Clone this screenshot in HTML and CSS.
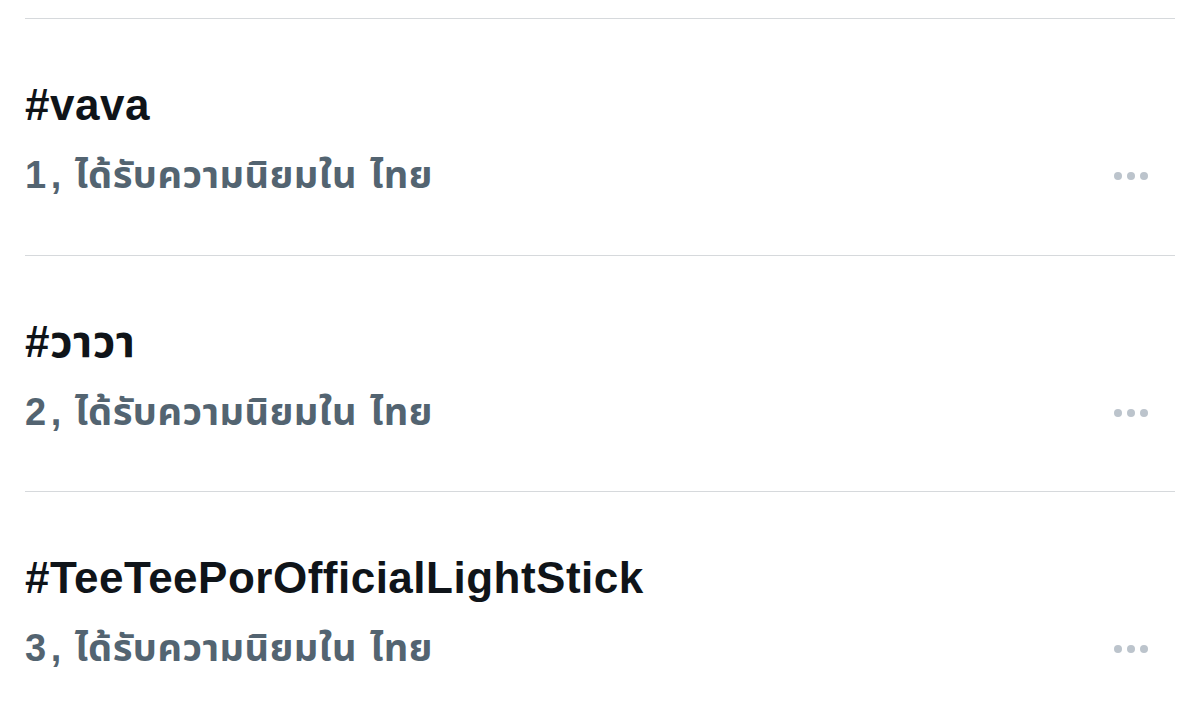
FILE: index.html
```html
<!DOCTYPE html>
<html lang="th">
<head>
    <meta charset="UTF-8">
    <meta name="viewport" content="width=device-width, initial-scale=1">
    <title>Trends</title>
    <link rel="stylesheet" href="styles.css">
</head>
<body>

    <div class="trend-list">
        <!-- Trend 1 -->
        <div class="trend">
            <div class="trend-title">#vava</div>
            <div class="trend-meta">
                <span class="trend-rank"><span class="rank-num">1</span>, ได้รับความนิยมใน ไทย</span>
                <span class="more-button"><i></i><i></i><i></i></span>
            </div>
        </div>

        <!-- Trend 2 -->
        <div class="trend">
            <div class="trend-title">#วาวา</div>
            <div class="trend-meta">
                <span class="trend-rank"><span class="rank-num">2</span>, ได้รับความนิยมใน ไทย</span>
                <span class="more-button"><i></i><i></i><i></i></span>
            </div>
        </div>

        <!-- Trend 3 -->
        <div class="trend">
            <div class="trend-title">#TeeTeePorOfficialLightStick</div>
            <div class="trend-meta">
                <span class="trend-rank"><span class="rank-num">3</span>, ได้รับความนิยมใน ไทย</span>
                <span class="more-button"><i></i><i></i><i></i></span>
            </div>
        </div>
    </div>

</body>
</html>
```

FILE: styles.css
```css
/* Trending list */
body {
    margin: 0;
    padding: 0;
    background-color: #fff;
    font-family: 'Liberation Sans', 'Noto Sans', 'Noto Sans Thai', sans-serif;
    overflow: hidden;
}

.trend-list {
    padding: 18px 25px 0 25px;
}

.trend {
    border-top: 1px solid #d6d9dc;
    height: 236.5px;
    display: flex;
    flex-direction: column;
    padding-top: 61px;
    box-sizing: border-box;
}

.trend-title {
    font-size: 44px;
    font-weight: bold;
    line-height: 50px;
    color: #0f1419;
    letter-spacing: 0.5px;
}

.trend-meta {
    display: flex;
    justify-content: space-between;
    align-items: center;
    margin-top: 21px;
}

.trend-rank {
    font-size: 38px;
    font-weight: bold;
    line-height: 48px;
    color: #536471;
    letter-spacing: 0.5px;
    word-spacing: 2px;
}

.rank-num {
    margin-right: 4px;
}

.more-button {
    display: flex;
    gap: 5px;
    margin-right: 27px;
    margin-top: 2px;
}

.more-button i {
    width: 8px;
    height: 8px;
    border-radius: 50%;
    background-color: #bcc4cc;
}
```
